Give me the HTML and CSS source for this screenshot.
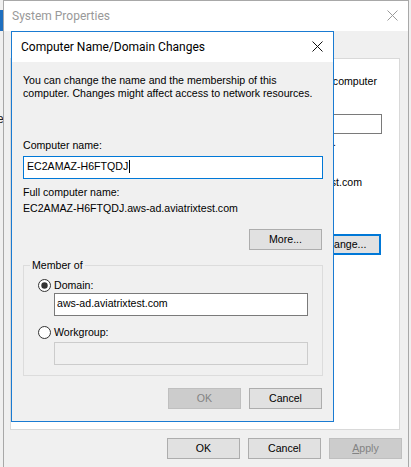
FILE: index.html
```html
<!DOCTYPE html>
<html>
<head>
<meta charset="utf-8">
<title>System Properties</title>
<link rel="stylesheet" href="styles.css">
</head>
<body>
<div class="desk-stripe"></div>
<span class="desk-text">e</span>
<div class="window">
  <div class="titlebar">
    <span class="title">System Properties</span>
    <svg class="close close-outer" width="11" height="11" viewBox="0 0 11 11"><path d="M0.5 0.5 L10.5 10.5 M10.5 0.5 L0.5 10.5" stroke="#9a9a9a" stroke-width="1" fill="none"/></svg>
  </div>
  <div class="winbody">
    <div class="panel">
      <div class="p-line p-intro">computer</div>
      <div class="p-input"></div>
      <div class="p-line p-example">Server".</div>
      <div class="p-line p-full">EC2AMAZ-H6FTQDJ.aws-ad.aviatrixtest.com</div>
      <div class="btn btn-change">Change...</div>
    </div>
    <div class="btnrow btnrow-outer">
      <div class="btn">OK</div>
      <div class="btn">Cancel</div>
      <div class="btn disabled"><span class="ul">A</span>pply</div>
    </div>
  </div>

  <div class="dialog">
    <div class="dlg-titlebar">
      <span class="dlg-title">Computer Name/Domain Changes</span>
      <svg class="close close-dlg" width="11" height="11" viewBox="0 0 11 11"><path d="M0.5 0.5 L10.5 10.5 M10.5 0.5 L0.5 10.5" stroke="#111" stroke-width="1" fill="none"/></svg>
    </div>
    <div class="dlg-body">
      <p class="intro">You can change the name and the membership of this<br>computer. Changes might affect access to network resources.</p>
      <div class="label label-name">Computer name:</div>
      <div class="field field-focus">EC2AMAZ-H6FTQDJ<span class="caret"></span></div>
      <div class="label label-full">Full computer name:</div>
      <div class="label label-fullval">EC2AMAZ-H6FTQDJ.aws-ad.aviatrixtest.com</div>
      <div class="more-row"><div class="btn">More...</div></div>
      <fieldset class="group">
        <legend>Member of</legend>
        <div class="radio-row radio-first">
          <svg class="radio" width="13" height="13" viewBox="0 0 13 13"><circle cx="6.5" cy="6.5" r="6" fill="#fff" stroke="#333" stroke-width="1"/><circle cx="6.5" cy="6.5" r="3.2" fill="#333"/></svg>
          <span>Domain:</span>
        </div>
        <div class="field field-domain">aws-ad.aviatrixtest.com</div>
        <div class="radio-row radio-second">
          <svg class="radio" width="13" height="13" viewBox="0 0 13 13"><circle cx="6.5" cy="6.5" r="6" fill="#fff" stroke="#333" stroke-width="1"/></svg>
          <span>Workgroup:</span>
        </div>
        <div class="field field-disabled"></div>
      </fieldset>
      <div class="btnrow btnrow-dlg">
        <div class="btn disabled">OK</div>
        <div class="btn">Cancel</div>
      </div>
    </div>
  </div>
</div>
</body>
</html>
```
FILE: styles.css
```css
html, body {
  margin: 0;
  padding: 0;
}
body {
  background: #f0f0f0;
  width: 411px;
  height: 467px;
  overflow: hidden;
  position: relative;
  font-family: "Liberation Sans", Arial, sans-serif;
  font-size: 10.6px;
  line-height: 13px;
  color: #000;
}
.desk-stripe {
  position: absolute;
  left: 0;
  top: 10px;
  width: 3px;
  height: 21px;
  background: #1f6fbf;
}
.desk-text {
  position: absolute;
  left: -3px;
  top: 113px;
  font-size: 12px;
  color: #222;
}
.window {
  position: relative;
  margin-left: 3px;
  width: 406px;
  height: 480px;
  box-sizing: border-box;
  border: 1px solid #a8a8a8;
  background: #f0f0f0;
}
.titlebar {
  height: 30px;
  background: #fff;
  display: flex;
  align-items: center;
  justify-content: space-between;
  font-family: Roboto, "Liberation Sans", sans-serif;
  font-size: 12px;
  line-height: 30px;
}
.title {
  margin-left: 8px;
  color: #999;
}
.close-outer {
  margin-right: 10px;
  margin-top: -1px;
}
.winbody {
  padding-top: 27px;
}
.panel {
  margin-left: 6px;
  width: 390px;
  height: 372px;
  box-sizing: border-box;
  border: 1px solid #d9d9d9;
  background: #fff;
  display: flex;
  flex-direction: column;
  align-items: flex-end;
}
.p-line {
  white-space: nowrap;
}
.p-intro {
  margin-top: 16px;
  margin-right: 22px;
}
.p-input {
  margin-top: 26px;
  margin-right: 17px;
  width: 150px;
  height: 20px;
  box-sizing: border-box;
  border: 1px solid #7a7a7a;
  background: #fff;
}
.p-example {
  margin-top: 2px;
  margin-right: 63px;
}
.p-full {
  margin-top: 27px;
  margin-right: 37px;
}
.btn {
  width: 73px;
  height: 21px;
  box-sizing: border-box;
  border: 1px solid #adadad;
  background: #e1e1e1;
  text-align: center;
  padding-top: 3px;
  white-space: nowrap;
}
.btn.disabled {
  background: #cccccc;
  border-color: #bfbfbf;
  color: #838383;
}
.ul {
  text-decoration: underline;
}
.btn-change {
  margin-top: 45px;
  margin-right: 18px;
  width: 75px;
  border: 2px solid #0078d7;
  padding-top: 2px;
}
.btnrow {
  display: flex;
  justify-content: flex-end;
  gap: 8px;
}
.btnrow-outer {
  margin-top: 8px;
  margin-right: 6px;
}

/* dialog */
.dialog {
  position: absolute;
  left: 7px;
  top: 30px;
  width: 323px;
  height: 391px;
  box-sizing: border-box;
  border: 1px solid #1a7bd2;
  background: #f0f0f0;
}
.dlg-titlebar {
  height: 30px;
  background: #fff;
  display: flex;
  align-items: center;
  justify-content: space-between;
  font-family: Roboto, "Liberation Sans", sans-serif;
  font-size: 12px;
  line-height: 30px;
  color: #000;
}
.dlg-title {
  margin-left: 9px;
}
.close-dlg {
  margin-right: 10px;
  margin-top: -2px;
}
.dlg-body {
  padding: 12px 10px 0 11px;
}
.intro {
  margin: 0;
  white-space: nowrap;
}
.label {
  white-space: nowrap;
}
.label-name {
  margin-top: 39px;
}
.field {
  height: 23px;
  box-sizing: border-box;
  border: 1px solid #7a7a7a;
  background: #fff;
  padding: 3px 3px 0;
  white-space: nowrap;
}
.field-focus {
  margin-top: 4px;
  border-color: #0078d7;
}
.caret {
  display: inline-block;
  width: 1px;
  height: 13px;
  background: #000;
  vertical-align: -3px;
  margin-left: 1px;
}
.label-full {
  margin-top: 7px;
}
.label-fullval {
  margin-top: 3px;
}
.more-row {
  margin-top: 14px;
  display: flex;
  justify-content: flex-end;
  padding-right: 1px;
}
.group {
  margin: 9px 0 0;
  padding: 0 0 10px;
  border: 1px solid #dcdcdc;
  min-width: 0;
}
.group legend {
  margin-left: 6px;
  padding: 0 2px;
}
.radio-row {
  display: flex;
  align-items: center;
  gap: 3px;
  margin-left: 14px;
  height: 13px;
}
.radio {
  display: block;
}
.radio-first {
  margin-top: 7px;
}
.radio-second {
  margin-top: 10px;
}
.field-domain {
  margin-top: 1px;
  margin-left: 30px;
  width: 254px;
  padding-left: 2px;
}
.field-disabled {
  margin-top: 3px;
  margin-left: 30px;
  width: 254px;
  border-color: #cccccc;
  background: #f0f0f0;
}
.btnrow-dlg {
  margin-top: 12px;
  padding-right: 1px;
}
```
